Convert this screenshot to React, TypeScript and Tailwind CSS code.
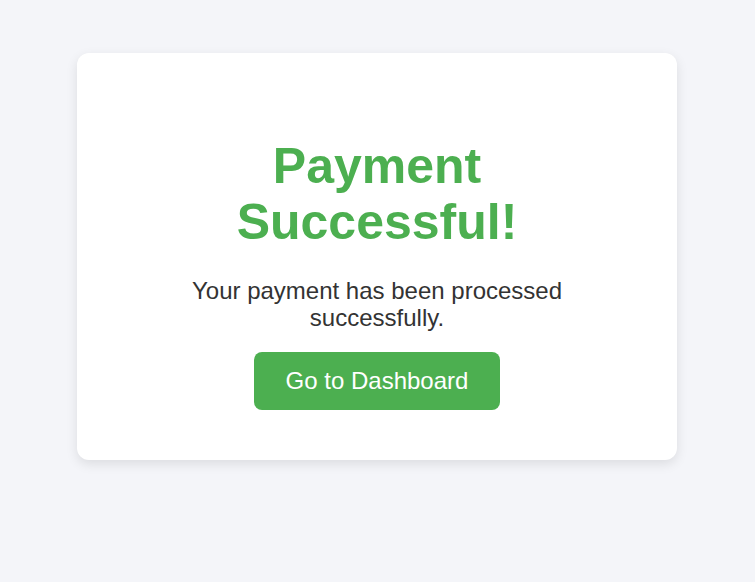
export default function App() {
  return (
    <div className="min-h-screen bg-[#f4f5f9] pt-[53px] font-['Liberation_Sans',Arial,sans-serif]">
      <div className="ml-[77px] flex w-[600px] flex-col items-center rounded-xl bg-white px-[100px] pt-[85px] pb-[50px] text-center shadow-[0_4px_12px_rgba(0,0,0,0.1)]">
        <h1 className="text-[50px] leading-[56px] font-bold text-[#4caf50]">
          Payment Successful!
        </h1>
        <p className="mt-[27px] text-[24px] leading-[27px] text-[#333]">
          Your payment has been processed successfully.
        </p>
        <button className="mt-[21px] rounded-lg bg-[#4caf50] px-[32px] py-[15px] text-[24px] leading-[1.15] text-white">
          Go to Dashboard
        </button>
      </div>
    </div>
  );
}
